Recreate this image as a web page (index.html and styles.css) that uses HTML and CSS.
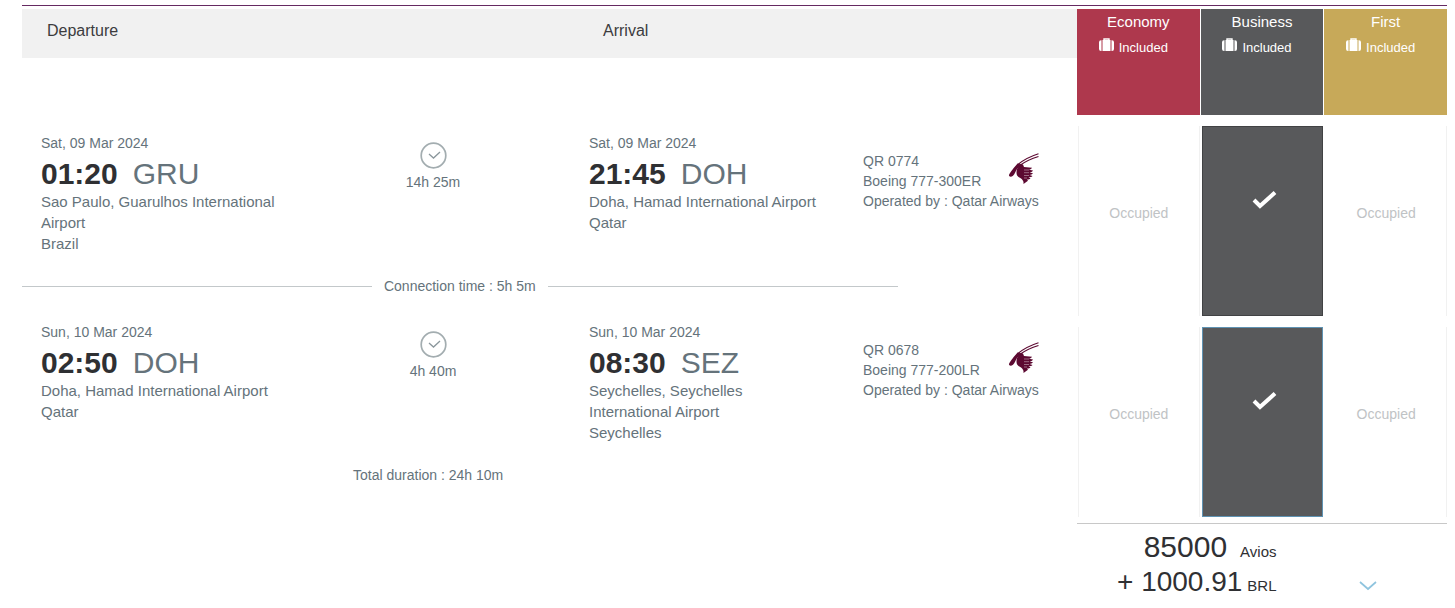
FILE: index.html
```html
<!DOCTYPE html>
<html lang="en">
<head>
<meta charset="utf-8">
<title>Flight selection</title>
<link rel="stylesheet" href="styles.css">
</head>
<body>
<svg class="defs" aria-hidden="true">
  <symbol id="clock" viewBox="0 0 28 28">
    <circle cx="14.500" cy="14.500" r="12.300" fill="none" stroke="#a3adb0" stroke-width="1.700"/>
    <path d="M10 13l4.500 4 6.500-6" fill="none" stroke="#8b979c" stroke-width="1.300"/>
  </symbol>
  <symbol id="check" viewBox="0 0 26 20">
    <path d="M3 10l6 6L24 2.500" fill="none" stroke="#fff" stroke-width="4"/>
  </symbol>
  <symbol id="bag" viewBox="0 0 15 13">
    <path d="M5 2.500V1h5v1.500" fill="none" stroke="#fff" stroke-width="1.400"/>
    <path d="M3.500 2h8v11h-8zM2.500 2.200v10.800H2a2 2 0 0 1-2-2V4.200a2 2 0 0 1 2-2zM12.500 2.200h.5a2 2 0 0 1 2 2V11a2 2 0 0 1-2 2h-.5z" fill="#fff"/>
  </symbol>
  <symbol id="oryx" viewBox="0 0 32 32">
    <path d="M10 11.500C16 6.500 22 3.500 30.500 .8M12.500 12C18 8 24 5.500 30.500 3.500" fill="none" stroke="#5c0931" stroke-width="1.200"/>
    <path d="M9.500 10.500l3.500 1-4 4.500c-1.500 2-2 5-4 6.700-1.700 1.400-4.300 1.300-4-.7.800-2.500 5.500-8 8.500-11.500z" fill="#5c0931"/>
    <path d="M12 11l3 .5 1 2.500 8 .8c-1 1.400-2 1.800-3 2l4 .7c-1 1.500-2 1.700-3.500 1.900l3.500.8c-1 1.300-2 1.600-3.500 1.700l3 1c-1 1.200-2.300 1.300-4 1.300l2 1.200c-1 .9-2 1.100-3.500 1l1 1.300-4.500 3.300c.5-3-1-5-5-7-2-1.200-2.500-4-1.500-8z" fill="#5c0931"/>
    <path d="M16 17h5M16 19.700h5M16 22.500h5M16 25h3" stroke="#fff" stroke-width=".4"/>
  </symbol>
</svg>
<main class="page">
  <section class="trip">
    <div class="trip-head"><span>Departure</span><span>Arrival</span></div>

    <article class="segment">
      <div class="stop">
        <div class="date">Sat, 09 Mar 2024</div>
        <div class="when"><strong>01:20</strong><span>GRU</span></div>
        <div class="place">Sao Paulo, Guarulhos International Airport</div>
        <div class="place">Brazil</div>
      </div>
      <div class="duration"><svg class="clock"><use href="#clock"/></svg><span>14h 25m</span></div>
      <div class="stop">
        <div class="date">Sat, 09 Mar 2024</div>
        <div class="when"><strong>21:45</strong><span>DOH</span></div>
        <div class="place">Doha, Hamad International Airport</div>
        <div class="place">Qatar</div>
      </div>
      <div class="flight">
        <div class="flight-top"><div>QR 0774<br>Boeing 777-300ER</div><svg class="oryx"><use href="#oryx"/></svg></div>
        <div>Operated by : Qatar Airways</div>
      </div>
    </article>

    <div class="connection">Connection time : 5h 5m</div>

    <article class="segment">
      <div class="stop">
        <div class="date">Sun, 10 Mar 2024</div>
        <div class="when"><strong>02:50</strong><span>DOH</span></div>
        <div class="place">Doha, Hamad International Airport</div>
        <div class="place">Qatar</div>
      </div>
      <div class="duration"><svg class="clock"><use href="#clock"/></svg><span>4h 40m</span></div>
      <div class="stop">
        <div class="date">Sun, 10 Mar 2024</div>
        <div class="when"><strong>08:30</strong><span>SEZ</span></div>
        <div class="place">Seychelles, Seychelles International Airport</div>
        <div class="place">Seychelles</div>
      </div>
      <div class="flight">
        <div class="flight-top"><div>QR 0678<br>Boeing 777-200LR</div><svg class="oryx"><use href="#oryx"/></svg></div>
        <div>Operated by : Qatar Airways</div>
      </div>
    </article>

    <div class="total">Total duration : 24h 10m</div>
  </section>

  <section class="fares">
    <div class="cabins">
      <div class="cabin economy"><span>Economy</span><div class="included"><svg class="bag"><use href="#bag"/></svg>Included</div></div>
      <div class="cabin business"><span>Business</span><div class="included"><svg class="bag"><use href="#bag"/></svg>Included</div></div>
      <div class="cabin first"><span>First</span><div class="included"><svg class="bag"><use href="#bag"/></svg>Included</div></div>
    </div>
    <div class="choices">
      <button class="choice" disabled>Occupied</button>
      <button class="choice selected" aria-label="Business selected"><svg class="check"><use href="#check"/></svg></button>
      <button class="choice" disabled>Occupied</button>
    </div>
    <div class="choices">
      <button class="choice" disabled>Occupied</button>
      <button class="choice selected current" aria-label="Business selected"><svg class="check"><use href="#check"/></svg></button>
      <button class="choice" disabled>Occupied</button>
    </div>
    <div class="price">
      <div class="amounts">
        <div class="amount"><span>85000</span><small class="unit wide">Avios</small></div>
        <div class="amount cash"><span>+ 1000.91</span><small class="unit">BRL</small></div>
      </div>
      <button class="expand" aria-label="Show price details"><svg class="chevron" viewBox="0 0 18 10"><path d="M1 1l8 7 8-7" fill="none" stroke="#8fc4de" stroke-width="1.700"/></svg></button>
    </div>
  </section>
</main>
</body>
</html>
```

FILE: styles.css
```css
* { box-sizing: border-box; }
body {
  margin: 0;
  background: #fff;
  color: #65737b;
  font: 14px/20px "Liberation Sans", Arial, sans-serif;
}
svg { display: block; }
.defs { display: none; }
button { font: inherit; border: 0; padding: 0; background: none; }

.page {
  display: grid;
  grid-template-columns: 1055fr 370fr;
  margin: 5px 8px 0 22px;
  padding-top: 3px;
  border-top: 1px solid #662a62;
}

.trip-head {
  display: grid;
  grid-template-columns: 556fr 474fr;
  height: 49px;
  padding: 12px 0 0 25px;
  background: #f1f1f1;
  color: #3c3c3e;
  font-size: 16px;
}
.segment {
  display: grid;
  grid-template-columns: 236fr 312fr 274fr 214fr;
  min-height: 123px;
  padding-left: 19px;
}
.trip-head + .segment { margin-top: 73px; }
.stop + .duration + .stop { padding-right: 38px; }
.date { line-height: 24px; }
.when {
  display: flex;
  gap: 15px;
  margin-top: 2px;
  font-size: 30px;
  line-height: 34px;
}
.when strong { color: #2f3033; }
.place { font-size: 15px; line-height: 21px; }
.duration {
  display: flex;
  flex-direction: column;
  align-items: center;
  gap: 3px;
  padding-top: 10px;
}
.clock { width: 28px; height: 28px; }
.flight { padding: 20px 37px 0 0; white-space: nowrap; }
.flight-top { display: flex; justify-content: space-between; }
.oryx { width: 32px; height: 32px; margin-top: 2px; }
.connection {
  display: flex;
  align-items: center;
  gap: 12px;
  width: 83%;
  margin: 22px 0 24px;
}
.connection::before, .connection::after {
  content: "";
  flex: 1;
  border-top: 1px solid #c3c8ca;
}
.total { width: 77%; margin-top: 22px; text-align: center; }

.cabins { display: grid; grid-template-columns: repeat(3, 1fr); gap: 1px; }
.cabin {
  height: 106px;
  padding-top: 3px;
  color: #fff;
  font-size: 15px;
  text-align: center;
}
.economy { background: #ae384d; }
.business { background: #58595b; }
.first { background: #c7a959; }
.included {
  display: flex;
  justify-content: center;
  gap: 5px;
  margin-top: 6px;
  padding-right: 10px;
  font-size: 13px;
}
.bag { width: 15px; height: 13px; }
.choices {
  display: grid;
  grid-template-columns: repeat(3, 1fr);
  gap: 2px;
  height: 190px;
  margin-top: 11px;
  padding-left: 1px;
}
.choice {
  padding-bottom: 16px;
  border: solid #f1f1f1;
  border-width: 0 1px;
  color: #bfc3c5;
}
.choice:last-child { border-left-color: transparent; }
.selected {
  display: flex;
  align-items: center;
  justify-content: center;
  padding: 0 0 42px 4px;
  border: 1px solid #414244;
  background: #58595b;
}
.current { border-color: #5f93b3; }
.check { width: 26px; height: 20px; }
.price {
  display: flex;
  align-items: flex-end;
  justify-content: space-between;
  margin-top: 6px;
  padding: 5px 70px 0 40px;
  border-top: 1px solid #c8c8c8;
  color: #2f3033;
}
.amount {
  display: flex;
  align-items: baseline;
  justify-content: flex-end;
  gap: 5px;
  font-size: 30px;
  line-height: 35px;
}
.cash { font-size: 28px; }
.unit { font-size: 15px; line-height: 20px; }
.wide { margin: 0 0 0 8px; }
.expand { padding: 0 0 8px; }
.chevron { width: 18px; height: 10px; }
```
